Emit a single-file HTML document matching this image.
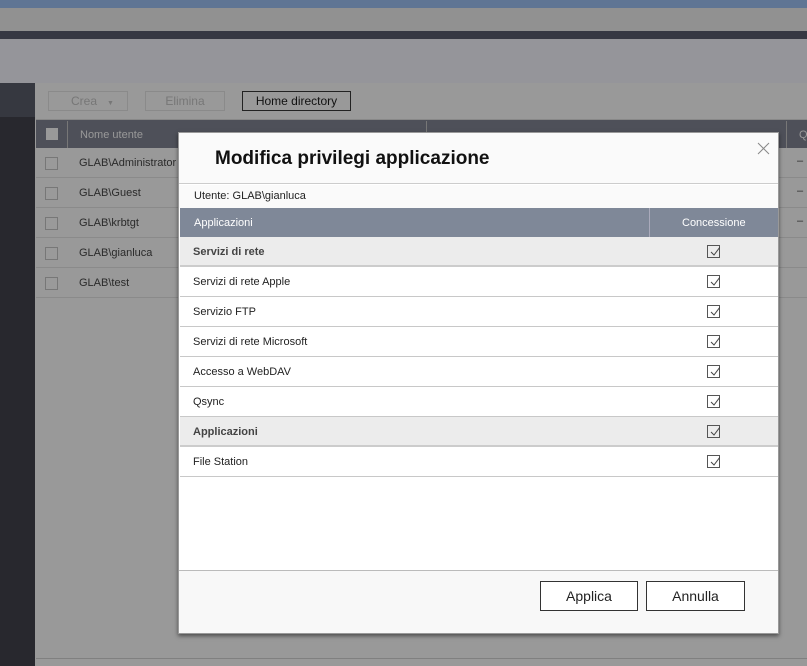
<!DOCTYPE html>
<html><head><meta charset="utf-8"><style>
*{margin:0;padding:0;box-sizing:border-box}
html,body{background:#999}
body{width:807px;height:666px;overflow:hidden;position:relative;font-family:"Liberation Sans",sans-serif;}
.a{position:absolute}
.bcb{position:absolute;width:13px;height:13px;border:1px solid #777;background:#9a9a9a}
.row{position:absolute;left:36px;width:771px;height:30px;border-bottom:1px solid #8a8a8a;font-size:11px;color:#2a2a2a}
.row i{position:absolute;left:43px;top:9px;font-style:normal}
.row b{position:absolute;left:761px;top:7px;font-weight:normal}
.dr{position:absolute;left:180px;width:598px;height:30px;border-bottom:1px solid #c8c8c8;font-size:11px;color:#222;background:#fff}
.dr.g{background:#ececec;font-weight:bold;color:#444;border-bottom:2px solid #ccc}
.dr span{position:absolute;left:13px;top:9px}
.ck{position:absolute;left:527px;top:8px;width:13px;height:13px;border:1px solid #555}
.ck svg{position:absolute;left:1px;top:0}
</style></head><body>
<div class="a" style="left:0;top:0;width:807px;height:666px;background:#999"></div>
<div class="a" style="left:0;top:0;width:807px;height:8px;background:#5f7594"></div>
<div class="a" style="left:0;top:8px;width:807px;height:23px;background:#919191"></div>
<div class="a" style="left:0;top:31px;width:807px;height:8px;background:#363843"></div>
<div class="a" style="left:0;top:39px;width:807px;height:44px;background:#95959a"></div>
<div class="a" style="left:0;top:83px;width:35px;height:34px;background:#363840"></div>
<div class="a" style="left:0;top:117px;width:35px;height:549px;background:#28282e"></div>
<div class="a" style="left:48px;top:91px;width:80px;height:20px;border:1px solid #8a8a8a;font-size:12px;color:#777;padding:2px 0 0 22px">Crea &nbsp;&nbsp;<span style="font-size:7px">▼</span></div>
<div class="a" style="left:145px;top:91px;width:80px;height:20px;border:1px solid #8a8a8a;font-size:12px;color:#777;text-align:center;padding-top:2px">Elimina</div>
<div class="a" style="left:242px;top:91px;width:109px;height:20px;border:1px solid #222;font-size:12px;color:#111;text-align:center;padding-top:2px">Home directory</div>
<div class="a" style="left:36px;top:119px;width:771px;height:1px;background:#888"></div>
<div class="a" style="left:36px;top:120px;width:771px;height:28px;background:#4e5059"></div>
<div class="a" style="left:46px;top:128px;width:12px;height:12px;background:#999"></div>
<div class="a" style="left:67px;top:121px;width:1px;height:27px;background:#777"></div>
<div class="a" style="left:80px;top:129px;font-size:11px;color:#999">Nome utente</div>
<div class="a" style="left:426px;top:121px;width:1px;height:27px;background:#777"></div>
<div class="a" style="left:786px;top:121px;width:1px;height:27px;background:#777"></div>
<div class="a" style="left:799px;top:129px;font-size:11px;color:#999">Q</div>
<div class="row" style="top:148px"><div class="bcb" style="left:9px;top:9px"></div><i>GLAB\Administrator</i><b>–</b></div>
<div class="row" style="top:178px"><div class="bcb" style="left:9px;top:9px"></div><i>GLAB\Guest</i><b>–</b></div>
<div class="row" style="top:208px"><div class="bcb" style="left:9px;top:9px"></div><i>GLAB\krbtgt</i><b>–</b></div>
<div class="row" style="top:238px"><div class="bcb" style="left:9px;top:9px"></div><i>GLAB\gianluca</i></div>
<div class="row" style="top:268px"><div class="bcb" style="left:9px;top:9px"></div><i>GLAB\test</i></div>
<div class="a" style="left:36px;top:658px;width:771px;height:1px;background:#808080"></div>

<div class="a" style="left:178px;top:132px;width:601px;height:502px;background:#fff;border:1px solid #999;box-shadow:0 2px 4px rgba(0,0,0,.5)">
<div class="a" style="left:0;top:0;width:599px;height:51px;background:#fafafa;border-bottom:1px solid #ccc"></div>
<div class="a" style="left:36px;top:15px;font-size:19px;font-weight:bold;color:#111">Modifica privilegi applicazione</div>
<svg class="a" style="left:578px;top:9px" width="13" height="13"><path d="M1 1L12 12M12 1L1 12" stroke="#888" stroke-width="1"/></svg>
<div class="a" style="left:0;top:52px;width:599px;height:23px;background:#fafafa"></div>
<div class="a" style="left:15px;top:57px;font-size:11px;color:#222">Utente: GLAB\gianluca</div>
<div class="a" style="left:1px;top:75px;width:598px;height:30px;background:#7f8898"></div>
<div class="a" style="left:15px;top:84px;font-size:11px;color:#fff">Applicazioni</div>
<div class="a" style="left:470px;top:75px;width:1px;height:30px;background:#aab"></div>
<div class="a" style="left:503px;top:84px;font-size:11px;color:#fff">Concessione</div>
<div class="a" style="left:0;top:437px;width:599px;height:63px;background:#f8f8f8;border-top:1px solid #bbb"></div>
<div class="a" style="left:361px;top:448px;width:98px;height:30px;border:1px solid #333;background:#fff;font-size:14px;text-align:center;padding-top:6px;color:#222">Applica</div>
<div class="a" style="left:467px;top:448px;width:99px;height:30px;border:1px solid #333;background:#fff;font-size:14px;text-align:center;padding-top:6px;color:#222">Annulla</div>
</div>
<div class="dr g" style="top:237px"><span>Servizi di rete</span><div class="ck"><svg width="11" height="11"><path d="M2 6L5 9L11 1" stroke="#444" fill="none"/></svg></div></div>
<div class="dr" style="top:267px"><span>Servizi di rete Apple</span><div class="ck"><svg width="11" height="11"><path d="M2 6L5 9L11 1" stroke="#444" fill="none"/></svg></div></div>
<div class="dr" style="top:297px"><span>Servizio FTP</span><div class="ck"><svg width="11" height="11"><path d="M2 6L5 9L11 1" stroke="#444" fill="none"/></svg></div></div>
<div class="dr" style="top:327px"><span>Servizi di rete Microsoft</span><div class="ck"><svg width="11" height="11"><path d="M2 6L5 9L11 1" stroke="#444" fill="none"/></svg></div></div>
<div class="dr" style="top:357px"><span>Accesso a WebDAV</span><div class="ck"><svg width="11" height="11"><path d="M2 6L5 9L11 1" stroke="#444" fill="none"/></svg></div></div>
<div class="dr" style="top:387px"><span>Qsync</span><div class="ck"><svg width="11" height="11"><path d="M2 6L5 9L11 1" stroke="#444" fill="none"/></svg></div></div>
<div class="dr g" style="top:417px"><span>Applicazioni</span><div class="ck"><svg width="11" height="11"><path d="M2 6L5 9L11 1" stroke="#444" fill="none"/></svg></div></div>
<div class="dr" style="top:447px"><span>File Station</span><div class="ck"><svg width="11" height="11"><path d="M2 6L5 9L11 1" stroke="#444" fill="none"/></svg></div></div>
</body></html>
